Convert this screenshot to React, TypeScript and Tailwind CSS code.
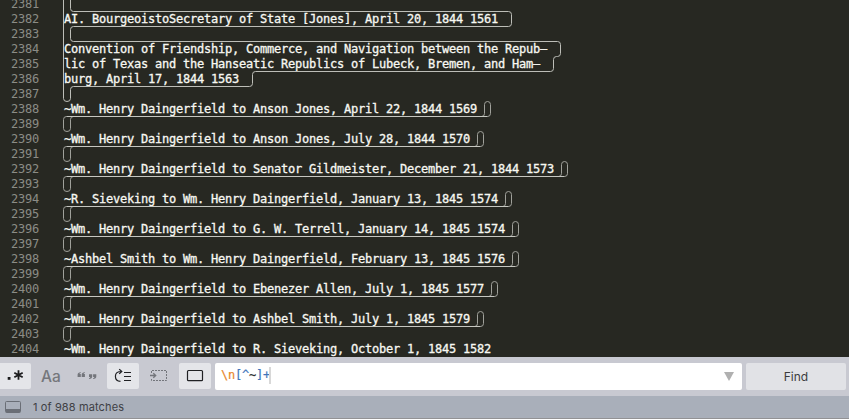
const rows: string[] = [
  '',
  'AI. BourgeoistoSecretary of State [Jones], April 20, 1844 1561',
  '',
  'Convention of Friendship, Commerce, and Navigation between the Repub–',
  'lic of Texas and the Hanseatic Republics of Lubeck, Bremen, and Ham–',
  'burg, April 17, 1844 1563',
  '',
  '~Wm. Henry Daingerfield to Anson Jones, April 22, 1844 1569',
  '',
  '~Wm. Henry Daingerfield to Anson Jones, July 28, 1844 1570',
  '',
  '~Wm. Henry Daingerfield to Senator Gildmeister, December 21, 1844 1573',
  '',
  '~R. Sieveking to Wm. Henry Daingerfield, January 13, 1845 1574',
  '',
  '~Wm. Henry Daingerfield to G. W. Terrell, January 14, 1845 1574',
  '',
  '~Ashbel Smith to Wm. Henry Daingerfield, February 13, 1845 1576',
  '',
  '~Wm. Henry Daingerfield to Ebenezer Allen, July 1, 1845 1577',
  '',
  '~Wm. Henry Daingerfield to Ashbel Smith, July 1, 1845 1579',
  '',
  '~Wm. Henry Daingerfield to R. Sieveking, October 1, 1845 1582',
];

const FIRST_LINE = 2381;
const CHAR = 7;
const LINE = 15;
const LEFT = 63.5;

// Outline of a match that covers a line's trailing newline and the blank line after it.
function newlineOutline(index: number) {
  const right = LEFT + (rows[index].length + 2) * CHAR;
  const left = right - 6;
  const y = -3.5 + index * LINE;
  const b = y + LINE;
  return {
    sides: [
      `M${left - 3} ${b}Q${left} ${b} ${left} ${b - 3}V${y + 3}Q${left} ${y} ${left + 3} ${y}Q${right} ${y} ${right} ${y + 3}V${b - 3}Q${right} ${b} ${right - 3} ${b}`,
      `M73.5 ${b}Q70.5 ${b} 70.5 ${b + 3}V${b + 12}Q70.5 ${b + 15} 67 ${b + 15}Q63.5 ${b + 15} 63.5 ${b + 12}V${b + 3}Q63.5 ${b} 66.5 ${b}`,
    ].join(''),
    base: `M66.5 ${b}H${right - 3}`,
  };
}

const firstOutline =
  'M70.5 -4V8.5Q70.5 11.5 73.5 11.5H508.5Q511.5 11.5 511.5 14.5V23.5Q511.5 26.5 508.5 26.5H73.5Q70.5 26.5 70.5 29.5V38.5Q70.5 41.5 73.5 41.5H557.5Q560.5 41.5 560.5 44.5V53.5Q560.5 56.5 557.5 56.5H556.5Q553.5 56.5 553.5 59.5V68.5Q553.5 71.5 550.5 71.5H255.5Q252.5 71.5 252.5 74.5V83.5Q252.5 86.5 249.5 86.5H73.5Q70.5 86.5 70.5 89.5V98.5Q70.5 101.5 67 101.5Q63.5 101.5 63.5 98.5V-4';

function Editor() {
  return (
    <main className="relative h-[357px] shrink-0 overflow-hidden bg-[#272822] font-['DejaVu_Sans_Mono',monospace] text-[12px] leading-[15px] tracking-[-0.224px]">
      <div className="-mt-[3px]">
        {rows.map((row, i) => (
          <div key={i} className="flex h-[15px] whitespace-pre">
            <span className="w-[39px] shrink-0 text-right text-[#8b8c86]">{FIRST_LINE + i}</span>
            <span className="ml-[25px] text-[#f8f8f2] [-webkit-text-stroke:0.3px_#f8f8f2]">{row}</span>
          </div>
        ))}
      </div>
      <svg className="absolute inset-0" width="849" height="357" fill="none" stroke="#bdbeb8">
        <path d={firstOutline} />
        {rows.map((row, i) => {
          if (!row.startsWith('~') || i === rows.length - 1) return null;
          const outline = newlineOutline(i);
          return (
            <g key={i}>
              <path d={outline.sides} stroke="#a0a19b" />
              <path d={outline.base} stroke="#c6c7c1" />
            </g>
          );
        })}
      </svg>
    </main>
  );
}

function QuoteMark({ x, y, flip = false }: { x: number; y: number; flip?: boolean }) {
  return (
    <g transform={flip ? `translate(${x + 3.2} ${y + 4.8}) rotate(180)` : `translate(${x} ${y})`}>
      <path d="M3.2 0V.8Q2 1 1.9 1.9H3.2V4.8H0V2.4Q0 .3 3.2 0Z" />
    </g>
  );
}

function FindBar() {
  return (
    <div className="flex h-[39px] shrink-0 items-start bg-[#c8c9d1] pt-[6px]">
      <button className="h-[26px] w-[31px] rounded-r-[2px] bg-[#e4e5e9]">
        <svg width="31" height="26" className="block">
          <rect x="7.7" y="14" width="2.8" height="2.8" fill="#1c1c1e" />
          <path d="M18.5 7.3v9.4M14.3 9.7l8.4 4.6M22.7 9.7l-8.4 4.6" stroke="#1c1c1e" strokeWidth="1.8" />
        </svg>
      </button>
      <button className="ml-[4px] h-[26px] w-[32px] text-center font-[Inter,sans-serif] text-[15.5px] leading-[27px] font-medium text-[#75777c]">
        Aa
      </button>
      <button className="ml-[4px] h-[26px] w-[32px]">
        <svg width="32" height="26" className="block" fill="#73757b">
          <QuoteMark x={6.6} y={9.2} />
          <QuoteMark x={10.7} y={9.2} />
          <QuoteMark x={18} y={11.2} flip />
          <QuoteMark x={22.1} y={11.2} flip />
        </svg>
      </button>
      <button className="ml-[4px] h-[26px] w-[32px] rounded-[2px] bg-[#e4e5e9]">
        <svg width="32" height="26" className="block" fill="none" stroke="#202124" strokeWidth="1.2">
          <path d="M13.5 18.4C10.3 18.2 8.4 16 8.4 13.2C8.4 10.4 10.4 8.5 14.5 8.5M12.2 6.1L14.8 8.5L12.2 10.9" />
          <path d="M17 9.5h7M17 13.5h7M17 17.5h7" />
        </svg>
      </button>
      <button className="ml-[4px] h-[26px] w-[32px]">
        <svg width="32" height="26" className="block" fill="none" stroke="#73757b">
          <path d="M8.5 10V7.5H23.5V17.5H8.5V15" strokeDasharray="2 1" />
          <path d="M7 12.5h5.5M10.3 10.3L12.7 12.5L10.3 14.7" strokeWidth="1.3" />
        </svg>
      </button>
      <button className="ml-[4px] h-[26px] w-[32px] rounded-[2px] bg-[#e4e5e9]">
        <svg width="32" height="26" className="block" fill="none" stroke="#202124" strokeWidth="1.2">
          <rect x="8.5" y="7.5" width="15" height="10.2" rx="1" />
        </svg>
      </button>
      <div className="ml-[4px] flex h-[27px] w-[527px] items-start rounded-[2px] bg-white pl-[6px] pr-[8px] font-['DejaVu_Sans_Mono',monospace] text-[12px] leading-[24px] tracking-[-0.224px]">
        <span className="text-[#e8872c] [-webkit-text-stroke:0.2px_#e8872c]">\n</span>
        <span className="text-[#3f75bb] [-webkit-text-stroke:0.2px_#3f75bb]">[^</span>
        <span className="text-[#333] [-webkit-text-stroke:0.2px_#333]">~</span>
        <span className="text-[#3f75bb] [-webkit-text-stroke:0.2px_#3f75bb]">]+</span>
        <span className="mt-[4px] -ml-px h-[17px] w-[2px] bg-[#d8d8d8]" />
        <svg width="10" height="9" className="mt-[9px] ml-auto">
          <path d="M0 0h10L5 9Z" fill="#b0b0b0" />
        </svg>
      </div>
      <button className="ml-[4px] h-[27px] w-[100px] rounded-[2px] bg-[#e1e2e6] font-[Inter,sans-serif] text-[12px] leading-[27px] text-[#3b3c3e]">
        Find
      </button>
    </div>
  );
}

function StatusBar() {
  return (
    <footer className="flex h-[23px] shrink-0 items-start border-b border-[#929295] bg-[#a9afba] pt-[4px] pl-[5px]">
      <svg width="16" height="13" className="mt-[1px]" fill="none" stroke="#6a6e76">
        <rect x="0.5" y="0.5" width="15" height="11" rx="1" />
        <path d="M1 8h14v3.5H1Z" fill="#6a6e76" stroke="none" />
      </svg>
      <span className="ml-[12px] font-[Inter,sans-serif] text-[11px] leading-[15px] tracking-[0.12px] text-[#3e4045]">
        1 of 988 matches
      </span>
    </footer>
  );
}

export default function App() {
  return (
    <div className="flex h-[419px] w-[849px] flex-col overflow-hidden">
      <Editor />
      <FindBar />
      <StatusBar />
    </div>
  );
}
